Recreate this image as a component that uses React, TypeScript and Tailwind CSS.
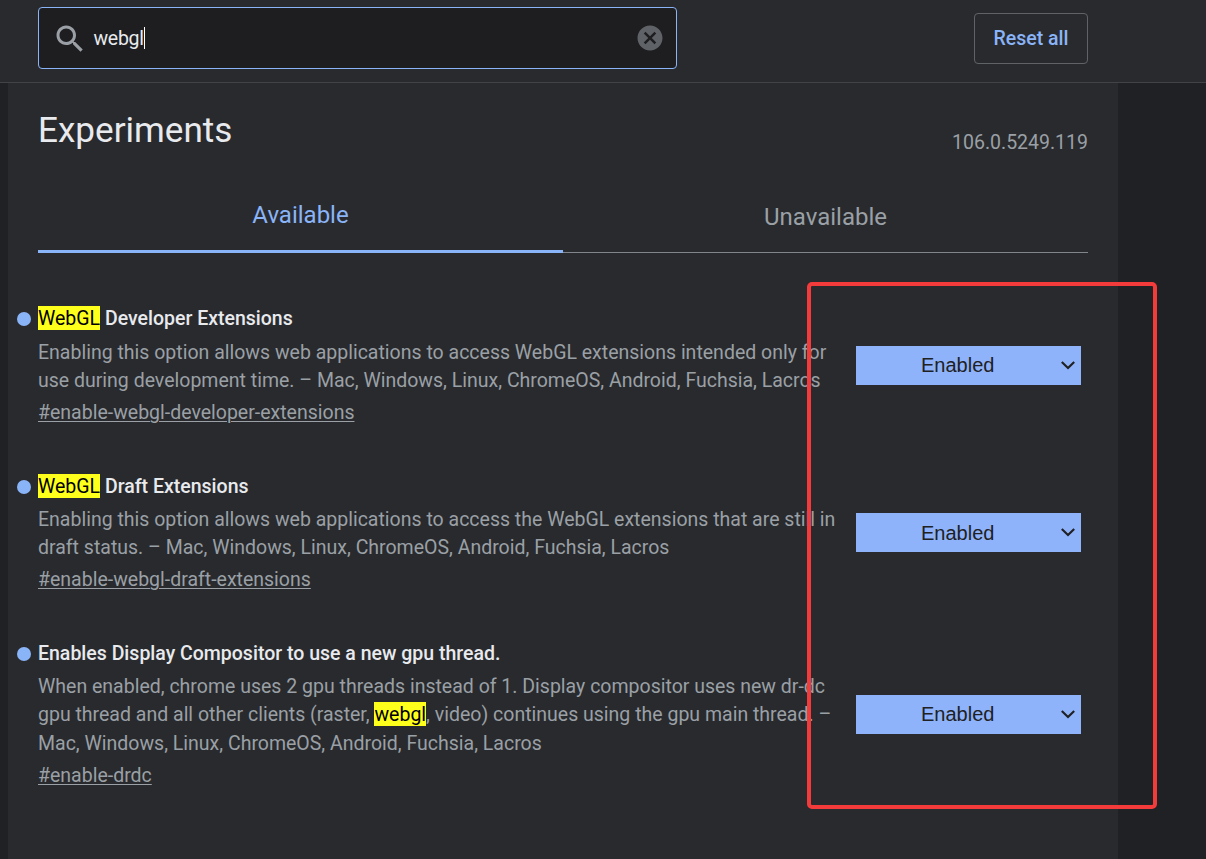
import { Fragment, type ReactNode } from "react";

function Mark({ children }: { children: ReactNode }) {
  return <mark className="bg-[#ffff1c] pt-px font-normal text-black">{children}</mark>;
}

type Flag = {
  id: string;
  title: ReactNode;
  lines: ReactNode[];
  height: string;
  titleGap: string;
  linkGap: string;
  selectOffset: string;
  labelOffset: string;
};

const flags: Flag[] = [
  {
    id: "enable-webgl-developer-extensions",
    title: (
      <>
        <Mark>WebGL</Mark> Developer Extensions
      </>
    ),
    lines: [
      "Enabling this option allows web applications to access WebGL extensions intended only for",
      "use during development time. – Mac, Windows, Linux, ChromeOS, Android, Fuchsia, Lacros",
    ],
    height: "h-[168px]",
    titleGap: "mb-[6px]",
    linkGap: "mt-[3px]",
    selectOffset: "mt-[42px]",
    labelOffset: "pt-0",
  },
  {
    id: "enable-webgl-draft-extensions",
    title: (
      <>
        <Mark>WebGL</Mark> Draft Extensions
      </>
    ),
    lines: [
      "Enabling this option allows web applications to access the WebGL extensions that are still in",
      "draft status. – Mac, Windows, Linux, ChromeOS, Android, Fuchsia, Lacros",
    ],
    height: "h-[167px]",
    titleGap: "mb-[5px]",
    linkGap: "mt-[3px]",
    selectOffset: "mt-[41px]",
    labelOffset: "pt-[2px]",
  },
  {
    id: "enable-drdc",
    title: "Enables Display Compositor to use a new gpu thread.",
    lines: [
      "When enabled, chrome uses 2 gpu threads instead of 1. Display compositor uses new dr-dc",
      <>
        gpu thread and all other clients (raster, <Mark>webgl</Mark>, video) continues using the gpu main thread. –
      </>,
      "Mac, Windows, Linux, ChromeOS, Android, Fuchsia, Lacros",
    ],
    height: "h-[190px]",
    titleGap: "mb-[5px]",
    linkGap: "mt-[4px]",
    selectOffset: "mt-[56px]",
    labelOffset: "pt-0",
  },
];

function Experiment({ flag }: { flag: Flag }) {
  return (
    <article className={`flex items-start ${flag.height}`}>
      <span className="mt-[8px] mr-[7px] size-[14px] shrink-0 rounded-full bg-[#8ab4f8]" />
      <div className="w-[818px] shrink-0 pt-px text-[19.5px] whitespace-nowrap text-[#9aa0a6]">
        <h3 className={`leading-[28px] font-medium text-[#e8eaed] ${flag.titleGap}`}>{flag.title}</h3>
        <p className="leading-[28.3px]">
          {flag.lines.map((line, i) => (
            <Fragment key={i}>
              {line}
              <br />
            </Fragment>
          ))}
        </p>
        <a className={`block leading-[28px] underline decoration-1 underline-offset-2 ${flag.linkGap}`}>#{flag.id}</a>
      </div>
      <button
        className={`flex h-[39px] w-[225px] shrink-0 items-center bg-[#8fb3fa] pr-[5px] pb-[2px] pl-[65px] font-['Liberation_Sans',Arial,sans-serif] text-[20px] text-[#202124] ${flag.selectOffset}`}
      >
        <span className={`flex-1 text-left ${flag.labelOffset}`}>Enabled</span>
        <svg className="size-[16px]" viewBox="0 0 16 16" fill="none" stroke="currentColor" strokeWidth="2.2">
          <path d="M1.8 5 8 11 14.2 5" />
        </svg>
      </button>
    </article>
  );
}

export default function App() {
  return (
    <div className="relative flex h-[859px] w-[1206px] flex-col overflow-hidden bg-[#202124] font-[Roboto,sans-serif]">
      <header className="flex h-[83px] shrink-0 items-start border-b border-[#424346] bg-[#292a2d] pl-[38px]">
        <div className="mt-[7px] flex h-[62px] w-[639px] items-center rounded-[4px] border border-[#8ab4f8] bg-[#1e1e20] pr-[11px] pl-[13px]">
          <svg className="mt-[2px] size-[36px]" viewBox="0 0 24 24" fill="#9aa0a6">
            <path d="M15.5 14h-.79l-.28-.27C15.41 12.59 16 11.11 16 9.5 16 5.91 13.09 3 9.5 3S3 5.91 3 9.5 5.91 16 9.5 16c1.61 0 3.09-.59 4.23-1.57l.27.28v.79l5 4.99L20.49 19l-4.99-5zm-6 0C7.01 14 5 11.99 5 9.5S7.01 5 9.5 5 14 7.01 14 9.5 11.99 14 9.5 14z" />
          </svg>
          <span className="mt-[2px] ml-[5.5px] text-[19.5px] tracking-[-0.3px] text-[#e8eaed]">webgl</span>
          <span className="h-[22px] w-px bg-white" />
          <svg className="ml-auto size-[30px]" viewBox="0 0 24 24" fill="#5f6368">
            <path d="M12 2C6.47 2 2 6.47 2 12s4.47 10 10 10 10-4.47 10-10S17.53 2 12 2zm5 13.59L15.59 17 12 13.41 8.41 17 7 15.59 10.59 12 7 8.41 8.41 7 12 10.59 15.59 7 17 8.41 13.41 12 17 15.59z" />
          </svg>
        </div>
        <button className="mt-[13px] ml-[297px] h-[51px] w-[114px] rounded-[4px] border border-[#5f6368] text-[19.5px] font-medium text-[#8ab4f8]">
          Reset all
        </button>
      </header>
      <main className="ml-[8px] flex w-[1110px] flex-1 flex-col bg-[#292a2d]">
        <div className="flex h-[104px] items-start justify-between pr-[30px] pl-[30px]">
          <h1 className="mt-[21px] text-[35.1px] leading-[52px] text-[#e8eaed]">Experiments</h1>
          <span className="mt-[46px] text-[19.5px] leading-[28px] text-[#9aa0a6]">106.0.5249.119</span>
        </div>
        <nav className="mx-[30px] flex h-[66px] text-center text-[24px] leading-[32px]">
          <div className="w-[525px] border-b-[3px] border-[#8ab4f8] pt-[12px] text-[#8ab4f8]">Available</div>
          <div className="w-[525px] border-b border-[#80868b] pt-[14px] text-[#9aa0a6]">Unavailable</div>
        </nav>
        <section className="mt-[51px] pl-[9px]">
          {flags.map((flag) => (
            <Experiment key={flag.id} flag={flag} />
          ))}
        </section>
      </main>
      <div className="pointer-events-none absolute top-[282px] left-[807px] h-[527px] w-[350px] rounded-[5px] border-4 border-[#f43b3b]" />
    </div>
  );
}
